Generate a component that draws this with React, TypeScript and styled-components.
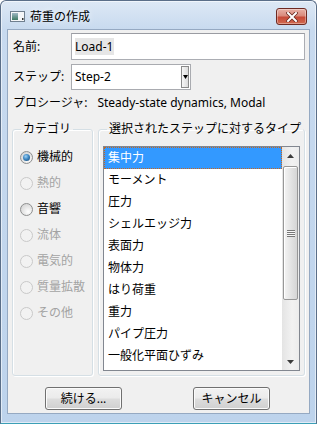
import React from "react";
import styled, { createGlobalStyle } from "styled-components";

const GlobalStyle = createGlobalStyle`
  html, body {
    margin: 0;
    padding: 0;
    background: #ffffff;
  }
  body {
    font-family: "Noto Sans", "Noto Sans CJK JP", sans-serif;
    font-size: 12px;
    color: #000;
  }
`;

const Window = styled.div`
  width: 317px;
  height: 424px;
  box-sizing: border-box;
  display: flex;
  flex-direction: column;
  border: 1px solid #5a6e88;
  border-bottom-color: #3b9fb6;
  border-radius: 6px 6px 0 0;
  background: linear-gradient(#dde8f5 0, #c8daef 28px, #bdd3ec 100%);
  box-shadow: inset 0 0 0 1px rgba(255, 255, 255, 0.55);
  overflow: hidden;
`;

const TitleBar = styled.div`
  height: 28px;
  flex-shrink: 0;
  box-sizing: border-box;
  display: flex;
  align-items: center;
  padding: 3px 9px 0 9px;
`;

const TitleText = styled.span`
  flex: 1;
  margin-left: 5px;
  line-height: 16px;
  font-size: 12px;
  text-shadow: 0 0 6px rgba(255, 255, 255, 0.9);
`;

const CloseButton = styled.div`
  width: 31px;
  height: 17px;
  box-sizing: border-box;
  border: 1px solid #6e2a22;
  border-radius: 3px;
  display: flex;
  align-items: center;
  justify-content: center;
  background: linear-gradient(#e8b1a6 0%, #d98a7c 45%, #c74a38 55%, #d06a50 100%);
  box-shadow: inset 0 0 0 1px rgba(255, 255, 255, 0.35);
`;

const Client = styled.div`
  flex: 1;
  margin: 0 6px 9px 6px;
  border: 1px solid #95a9c2;
  background: #f0f0f0;
  display: flex;
  flex-direction: column;
  padding: 3px 4px 0 4px;
`;

const FormRow = styled.div<{ $h: number; $top: number }>`
  display: flex;
  align-items: center;
  height: ${(p) => p.$h}px;
  margin-top: ${(p) => p.$top}px;
`;

const Label = styled.span`
  width: 58px;
  padding-left: 1px;
  line-height: 16px;
`;

const TextInput = styled.div`
  flex: 1;
  align-self: stretch;
  box-sizing: border-box;
  border: 1px solid #abadb3;
  border-top-color: #9a9ca2;
  background: #fff;
  display: flex;
  align-items: center;
  padding-left: 3px;
`;

const Selected = styled.span`
  background: #e6e6e6;
  line-height: 17px;
  padding-right: 1px;
`;

const Combo = styled.div`
  width: 120px;
  align-self: stretch;
  box-sizing: border-box;
  border: 1px solid #a9abb0;
  background: #fff;
  display: flex;
  align-items: center;
  padding: 1px 1px 1px 3px;
`;

const ComboText = styled.span`
  flex: 1;
  line-height: 16px;
`;

const ComboButton = styled.div`
  width: 8px;
  align-self: stretch;
  box-sizing: border-box;
  border: 1px solid #8a8a8a;
  background: linear-gradient(to right, #f7f7f7, #dcdcdc);
  display: flex;
  align-items: center;
  justify-content: flex-end;
`;

const ProcRow = styled.div`
  margin-top: 5px;
  padding-left: 1px;
  line-height: 16px;
  display: flex;
`;

const ProcLabel = styled.span`
  margin-right: 10px;
`;

const Groups = styled.div`
  margin-top: 11px;
  display: flex;
  gap: 5px;
  height: 254px;
`;

const Group = styled.fieldset<{ $w: number }>`
  width: ${(p) => p.$w}px;
  box-sizing: border-box;
  margin: 0;
  padding: 0;
  min-width: 0;
  border: 1px solid #d5dfe5;
  border-radius: 3px;
  box-shadow: inset 1px 1px 0 #fff, 1px 1px 0 #fff;
  display: flex;
  flex-direction: column;
`;

const Legend = styled.legend`
  margin-left: 8px;
  padding: 0 2px;
  line-height: 14px;
  font-size: 12px;
  white-space: nowrap;
`;

const RadioList = styled.div`
  padding: 8px 0 0 7px;
  display: flex;
  flex-direction: column;
`;

const RadioRow = styled.div<{ $disabled?: boolean }>`
  height: 26px;
  display: flex;
  align-items: center;
  gap: 4px;
  color: ${(p) => (p.$disabled ? "#a3a3a3" : "#000")};
  line-height: 16px;
`;

const RadioCircle = styled.span<{ $checked?: boolean; $disabled?: boolean }>`
  width: 13px;
  height: 13px;
  box-sizing: border-box;
  border-radius: 50%;
  border: 1px solid ${(p) => (p.$disabled ? "#c9c9c9" : "#8e8f8f")};
  background: ${(p) =>
    p.$disabled
      ? "#f2f2f2"
      : "radial-gradient(circle at 65% 70%, #ffffff 0%, #e9e9e9 40%, #cdcdcd 100%)"};
  display: flex;
  align-items: center;
  justify-content: center;
  &::after {
    content: "";
    display: ${(p) => (p.$checked ? "block" : "none")};
    width: 7px;
    height: 7px;
    border-radius: 50%;
    background: radial-gradient(circle at 40% 35%, #9fd2f4 0%, #3f88c3 45%, #123e66 100%);
  }
`;

const ListWrap = styled.div`
  margin: 10px 4px 0 4px;
  height: 225px;
  box-sizing: border-box;
  border: 1px solid #828790;
  background: #fff;
  display: flex;
`;

const Items = styled.div`
  flex: 1;
  display: flex;
  flex-direction: column;
  overflow: hidden;
`;

const Item = styled.div<{ $selected?: boolean }>`
  height: 22px;
  flex-shrink: 0;
  line-height: 22px;
  padding-left: 4px;
  white-space: nowrap;
  background: ${(p) => (p.$selected ? "#3399ff" : "transparent")};
  color: ${(p) => (p.$selected ? "#fff" : "#000")};
  outline: ${(p) => (p.$selected ? "1px dotted #c8661e" : "none")};
  outline-offset: -1px;
`;

const ScrollBar = styled.div`
  width: 17px;
  display: flex;
  flex-direction: column;
  background: linear-gradient(to right, #e4e4e4, #f2f2f2 60%, #ececec);
`;

const ArrowBox = styled.div`
  height: 17px;
  display: flex;
  align-items: center;
  justify-content: center;
`;

const Track = styled.div`
  flex: 1;
  padding: 2px 1px 0 1px;
`;

const Thumb = styled.div`
  height: 134px;
  box-sizing: border-box;
  border: 1px solid #979797;
  border-radius: 2px;
  background: linear-gradient(to right, #f4f4f4, #e6e6e6 45%, #d5d5d5);
  box-shadow: inset 1px 1px 0 #fff;
  display: flex;
  align-items: center;
  justify-content: center;
`;

const Grip = styled.span`
  width: 8px;
  height: 7px;
  background: repeating-linear-gradient(#777 0, #777 1px, #f8f8f8 1px, #f8f8f8 2px);
`;

const ButtonRow = styled.div`
  margin-top: 11px;
  padding-left: 33px;
  display: flex;
  gap: 71px;
`;

const Button = styled.button`
  width: 77px;
  height: 23px;
  box-sizing: border-box;
  border: 1px solid #707070;
  border-radius: 3px;
  background: linear-gradient(#f2f2f2 0%, #ebebeb 48%, #dddddd 52%, #cfcfcf 100%);
  box-shadow: inset 0 0 0 1px #fbfbfb;
  font: inherit;
  color: #000;
  padding: 0;
  line-height: 16px;
`;

const categories = [
  { name: "機械的", checked: true },
  { name: "熱的", disabled: true },
  { name: "音響" },
  { name: "流体", disabled: true },
  { name: "電気的", disabled: true },
  { name: "質量拡散", disabled: true },
  { name: "その他", disabled: true },
];

const types = [
  "集中力",
  "モーメント",
  "圧力",
  "シェルエッジ力",
  "表面力",
  "物体力",
  "はり荷重",
  "重力",
  "パイプ圧力",
  "一般化平面ひずみ",
];

const WindowIcon = () => (
  <svg width="15" height="11" viewBox="0 0 15 11">
    <defs>
      <linearGradient id="wi" x1="0" y1="0" x2="0" y2="1">
        <stop offset="0" stopColor="#9fb7c4" />
        <stop offset="1" stopColor="#3e7a64" />
      </linearGradient>
    </defs>
    <rect x="0.5" y="0.5" width="14" height="10" fill="#f4f6f8" stroke="#6f7f8f" />
    <rect x="2" y="2" width="6" height="7" fill="url(#wi)" />
    <rect x="12" y="7" width="1.5" height="2" fill="#333" />
  </svg>
);

const CloseX = () => (
  <svg width="12" height="10" viewBox="0 0 12 10">
    <path d="M2 1 L10 9 M10 1 L2 9" stroke="#6b2a20" strokeWidth="3.6" strokeLinecap="square" />
    <path d="M2 1 L10 9 M10 1 L2 9" stroke="#ffffff" strokeWidth="2" strokeLinecap="square" />
  </svg>
);

const Arrow = ({ down }: { down?: boolean }) => (
  <svg width="7" height="4" viewBox="0 0 7 4">
    <polygon points={down ? "0,0 7,0 3.5,4" : "0,4 7,4 3.5,0"} fill="#3c3c3c" />
  </svg>
);

const App = () => {
  return (
    <Window>
      <GlobalStyle />
      <TitleBar>
        <WindowIcon />
        <TitleText>荷重の作成</TitleText>
        <CloseButton>
          <CloseX />
        </CloseButton>
      </TitleBar>
      <Client>
        <FormRow $h={27} $top={0}>
          <Label>名前:</Label>
          <TextInput>
            <Selected>Load-1</Selected>
          </TextInput>
        </FormRow>
        <FormRow $h={26} $top={4}>
          <Label>ステップ:</Label>
          <Combo>
            <ComboText>Step-2</ComboText>
            <ComboButton>
              <svg width="5" height="4" viewBox="0 0 5 4">
                <polygon points="0,0 5,0 2.5,4" fill="#000" />
              </svg>
            </ComboButton>
          </Combo>
        </FormRow>
        <ProcRow>
          <ProcLabel>プロシージャ:</ProcLabel>
          <span>Steady-state dynamics, Modal</span>
        </ProcRow>
        <Groups>
          <Group $w={81}>
            <Legend>カテゴリ</Legend>
            <RadioList>
              {categories.map((c) => (
                <RadioRow key={c.name} $disabled={c.disabled}>
                  <RadioCircle $checked={c.checked} $disabled={c.disabled} />
                  <span>{c.name}</span>
                </RadioRow>
              ))}
            </RadioList>
          </Group>
          <Group $w={207}>
            <Legend>選択されたステップに対するタイプ</Legend>
            <ListWrap>
              <Items>
                {types.map((t, i) => (
                  <Item key={t} $selected={i === 0}>
                    {t}
                  </Item>
                ))}
              </Items>
              <ScrollBar>
                <ArrowBox>
                  <Arrow />
                </ArrowBox>
                <Track>
                  <Thumb>
                    <Grip />
                  </Thumb>
                </Track>
                <ArrowBox>
                  <Arrow down />
                </ArrowBox>
              </ScrollBar>
            </ListWrap>
          </Group>
        </Groups>
        <ButtonRow>
          <Button>続ける...</Button>
          <Button>キャンセル</Button>
        </ButtonRow>
      </Client>
    </Window>
  );
};

export default App;
